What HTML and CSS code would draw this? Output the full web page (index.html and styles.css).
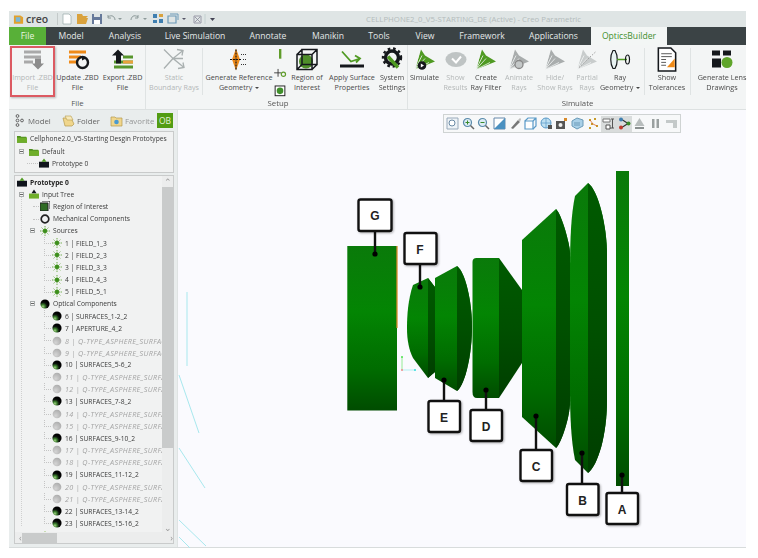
FILE: index.html
```html
<!DOCTYPE html>
<html lang="en">
<head>
<meta charset="utf-8">
<title>Creo Parametric - OpticsBuilder</title>
<link rel="stylesheet" href="styles.css">
</head>
<body>
<svg class="defs" width="0" height="0" aria-hidden="true">
  <defs>
    <radialGradient id="ball" cx="0.28" cy="0.78" r="0.62">
      <stop offset="0" stop-color="#a4cf86"/><stop offset="0.35" stop-color="#3a7d2c"/><stop offset="0.72" stop-color="#0b120b"/><stop offset="1" stop-color="#000"/>
    </radialGradient>
    <radialGradient id="ballgrey" cx="0.35" cy="0.7" r="0.8">
      <stop offset="0" stop-color="#d4d4d4"/><stop offset="1" stop-color="#a8a8a8"/>
    </radialGradient>
    <linearGradient id="lensV" x1="0" y1="0" x2="0" y2="1">
      <stop offset="0" stop-color="#0a7a0a"/><stop offset="0.4" stop-color="#038503"/><stop offset="0.75" stop-color="#006c00"/><stop offset="1" stop-color="#004c00"/>
    </linearGradient>
    <linearGradient id="lensD" x1="0" y1="0" x2="0" y2="1">
      <stop offset="0" stop-color="#005a00"/><stop offset="0.5" stop-color="#005000"/><stop offset="1" stop-color="#003e00"/>
    </linearGradient>
    <symbol id="sphere" viewBox="0 0 12 12"><circle cx="6" cy="6" r="5.500" fill="url(#ball)"/></symbol>
    <symbol id="sphere-off" viewBox="0 0 12 12"><circle cx="6" cy="6" r="5.200" fill="url(#ballgrey)"/></symbol>
    <symbol id="field" viewBox="0 0 12 12"><g stroke="#4f9a22" stroke-width="1" stroke-dasharray="1.400 .7"><path d="M6 0v12M0 6h12M2 2l8 8M10 2l-8 8"/></g><circle cx="6" cy="6" r="2.600" fill="#3d8f1c"/></symbol>
    <symbol id="folder" viewBox="0 0 12 10"><path d="M0 2h4l1 1h6l1 2v5H0z" fill="#4f8f1e"/><path d="M0 4h12v6H0z" fill="#6fae2a"/></symbol>
    <symbol id="proto" viewBox="0 0 12 11"><path d="M0 4h12v7H0z" fill="#10151c"/><path d="M6 0l3 4H3z" fill="#4f9a22"/></symbol>
    <symbol id="inputfolder" viewBox="0 0 12 11"><path d="M0 5h12v6H0z" fill="#6fae2a"/><path d="M6 0l3 4.500H3z" fill="#10151c"/></symbol>
    <symbol id="cone" viewBox="0 0 24 22"><path d="M2 21L8 1l4 6 10 6z" fill="currentColor"/><path d="M2 21L6 5M2 21l7-14M2 21l10-11M2 21l14-7" stroke="#f3f5f5" stroke-width=".8" fill="none"/></symbol>
  </defs>
</svg>

<div class="window">
  <header class="titlebar">
    <div class="qat">
      <span class="logo"><svg width="11" height="11" viewBox="0 0 12 11"><path d="M1 1h7l3 2v7H1z" fill="#e2a12d"/><path d="M3 3h5v5H3z" fill="#7bb7d8"/></svg><span class="logo-text">creo</span></span>
      <span class="qat-sep"></span>
      <svg width="134" height="12" viewBox="0 0 134 12">
        <path d="M5 1h6l2 2v8H5z" fill="#fff" stroke="#9aa" stroke-width=".7"/>
        <path d="M19 5h9l2-2h-5l-1-2h-5zM19 5v6h9l2-6z" fill="#d9a23d"/>
        <path d="M34 1h10v10H34z" fill="#66799a"/><path d="M36 1h6v3h-6z" fill="#dfe5e5"/><path d="M36 7h6v4h-6z" fill="#fff"/>
        <path d="M50 4c4-3 7 0 7 3M50 2v3h3" fill="none" stroke="#8d9a9a" stroke-width="1"/>
        <path d="M60 5l2 2 2-2z" fill="#8d9a9a"/>
        <path d="M80 4c-4-3-7 0-7 3M80 2v3h-3" fill="none" stroke="#8d9a9a" stroke-width="1"/>
        <path d="M85 5l2 2 2-2z" fill="#8d9a9a"/>
        <path d="M95 1h4v4h-4zM101 6h4v4h-4zM95 7h4v3h-4z" fill="#3f7fb0"/><path d="M101 1h4v3h-4z" fill="#d9a23d"/>
        <path d="M110 3h8v7h-8z" fill="none" stroke="#6d9ab8" stroke-width="1.200"/><path d="M112 1h8v6" fill="none" stroke="#6d9ab8"/>
        <path d="M124 5l2 2 2-2z" fill="#556"/>
      </svg>
      <svg width="26" height="12" viewBox="0 0 26 12"><path d="M2 3h7v7H2z" fill="none" stroke="#889" stroke-width=".8"/><path d="M3 4l5 5M8 4l-5 5" stroke="#889" stroke-width=".8"/><path d="M13 1v10" stroke="#bcc" stroke-width=".8"/><path d="M18 5l2.500 3 2.500-3z" fill="#445"/></svg>
    </div>
    <div class="doc-title">CELLPHONE2_0_V5-STARTING_DE (Active) - Creo Parametric</div>
  </header>

  <nav class="tabs">
    <a class="tab tab-file">File</a>
    <a class="tab">Model</a>
    <a class="tab">Analysis</a>
    <a class="tab">Live Simulation</a>
    <a class="tab">Annotate</a>
    <a class="tab">Manikin</a>
    <a class="tab">Tools</a>
    <a class="tab">View</a>
    <a class="tab">Framework</a>
    <a class="tab">Applications</a>
    <a class="tab tab-active">OpticsBuilder</a>
  </nav>

  <section class="ribbon">
    <div class="group group-file">
      <div class="items">
        <div class="btn w45 off hl">
          <svg class="ico" width="24" height="22" viewBox="0 0 24 22"><path d="M3 2h17v3H3zM3 7h17v3H3zM3 12h9v3H3z" fill="#a9a9a9"/><path d="M14 10h6v5h3l-6 6-6-6h3z" fill="#8c8c8c"/></svg>
          <span class="lbl">Import .ZBD<br>File</span>
        </div>
        <div class="btn w45">
          <svg class="ico" width="24" height="22" viewBox="0 0 24 22"><path d="M3 2h17v3H3zM3 7h12v3H3zM3 12h9v3H3z" fill="#ef8a17"/><circle cx="16.500" cy="14" r="5.500" fill="none" stroke="#15181c" stroke-width="2.400"/><path d="M16 8l4 2-4 2z" fill="#15181c"/></svg>
          <span class="lbl">Update .ZBD<br>File</span>
        </div>
        <div class="btn w45">
          <svg class="ico" width="24" height="22" viewBox="0 0 24 22"><path d="M3 12h19v3H3zM3 17h19v3H3z" fill="#57962c"/><path d="M12 7h10v3H12z" fill="#57962c"/><path d="M12 12h10v3H12z" fill="#e9a13b"/><path d="M7 1l6 6h-3v8H5V7H1z" fill="#15181c"/></svg>
          <span class="lbl">Export .ZBD<br>File</span>
        </div>
      </div>
      <div class="group-label">File</div>
    </div>

    <div class="group group-setup">
      <div class="items">
        <div class="btn w50 off">
          <svg class="ico" width="24" height="22" viewBox="0 0 24 22"><g fill="none" stroke="#a9b0b0" stroke-width="1.300"><path d="M2 1l9 9 10-8M2 20l9-10 11 9M11 10h10"/><path d="M15 1l6 1-1 5M16 20l6-1-1-5"/></g></svg>
          <span class="lbl">Static<br>Boundary Rays</span>
        </div>
        <span class="vsep sep-a"></span>
        <div class="btn w66">
          <svg class="ico" width="24" height="24" viewBox="0 0 24 24"><path d="M9 1l4 11-4 11-4-11z" fill="#ef8a17"/><path d="M9 2v20M3 12h12" stroke="#15181c" stroke-width="1.200" stroke-dasharray="2 1"/><path d="M14 7h5M16 12h4M14 17h5" stroke="#333" stroke-dasharray="1 1"/></svg>
          <span class="lbl">Generate Reference<br>Geometry <i class="caret"></i></span>
        </div>
        <div class="mini">
          <svg width="14" height="12" viewBox="0 0 14 12"><path d="M6 1h2.400v10H6z" fill="#5f9c2a"/></svg>
          <svg width="14" height="12" viewBox="0 0 14 12"><path d="M1 6h7M5 2v8" stroke="#333" stroke-width=".9"/><circle cx="10.500" cy="7.500" r="2.200" fill="none" stroke="#5f9c2a" stroke-width="1.200"/></svg>
          <svg width="14" height="12" viewBox="0 0 14 12"><rect x="2" y="1" width="10" height="10" fill="#fff" stroke="#222"/><circle cx="7" cy="6" r="3.400" fill="#3f8f2a"/></svg>
        </div>
        <div class="btn w36">
          <svg class="ico" width="24" height="24" viewBox="0 0 24 24"><circle cx="11" cy="14" r="7" fill="#4f8f2a"/><g fill="none" stroke="#15181c" stroke-width="1.500"><path d="M2 7h15v15H2zM7 2h15v15H7zM2 7l5-5M17 7l5-5M2 22l5-5M17 22l5-5"/></g></svg>
          <span class="lbl">Region of<br>Interest</span>
        </div>
        <div class="btn w50">
          <svg class="ico" width="26" height="22" viewBox="0 0 26 22"><path d="M3 3l9 10 9-3M16 7l5 3-4 4" fill="none" stroke="#4f9a22" stroke-width="1.800"/><path d="M1 16h24v3H1z" fill="#15181c"/></svg>
          <span class="lbl">Apply Surface<br>Properties</span>
        </div>
        <div class="btn w30">
          <svg class="ico" width="22" height="24" viewBox="0 0 22 24"><circle cx="11" cy="10" r="6.500" fill="none" stroke="#15181c" stroke-width="3.500"/><circle cx="11" cy="10" r="9" fill="none" stroke="#15181c" stroke-width="2.400" stroke-dasharray="2.600 2.800"/><path d="M7 9l10 11" stroke="#4f9a22" stroke-width="3.400"/></svg>
          <span class="lbl">System<br>Settings</span>
        </div>
      </div>
      <div class="group-label">Setup</div>
    </div>

    <div class="group group-sim">
      <div class="items">
        <div class="btn s33 c-green">
          <svg class="ico" width="24" height="22" viewBox="0 0 24 22"><use href="#cone"/><circle cx="9" cy="17" r="4.300" fill="#15181c"/><path d="M7.800 15l3.200 2-3.200 2z" fill="#fff"/></svg>
          <span class="lbl">Simulate</span>
        </div>
        <div class="btn s29 off">
          <svg class="ico" width="24" height="22" viewBox="0 0 24 22"><ellipse cx="12" cy="11" rx="10.500" ry="7.500" fill="#bfc4c4"/><path d="M8 10l4 4 5-6" fill="none" stroke="#fff" stroke-width="2"/></svg>
          <span class="lbl">Show<br>Results</span>
        </div>
        <div class="btn s32 c-green">
          <svg class="ico" width="24" height="22" viewBox="0 0 24 22"><use href="#cone"/></svg>
          <span class="lbl">Create<br>Ray Filter</span>
        </div>
        <div class="btn s34 off c-grey">
          <svg class="ico" width="24" height="22" viewBox="0 0 24 22"><use href="#cone"/><circle cx="12" cy="16" r="4" fill="#c4c8c8" stroke="#888" stroke-width="1.300"/></svg>
          <span class="lbl">Animate<br>Rays</span>
        </div>
        <div class="btn s38 off c-grey">
          <svg class="ico" width="24" height="22" viewBox="0 0 24 22"><use href="#cone"/></svg>
          <span class="lbl">Hide/<br>Show Rays</span>
        </div>
        <div class="btn s26 off c-pale">
          <svg class="ico" width="24" height="22" viewBox="0 0 24 22"><use href="#cone"/><path d="M4 19L21 3" stroke="#999" stroke-dasharray="1.500 1.500"/></svg>
          <span class="lbl">Partial<br>Rays</span>
        </div>
        <div class="btn s40">
          <svg class="ico" width="24" height="22" viewBox="0 0 24 22"><path d="M5 2c-3 5-3 13 0 18h2c3-5 3-13 0-18z" fill="#e8f2f2" stroke="#15181c" stroke-width="1.200"/><path d="M9 11h10" stroke="#4f9a22" stroke-width="1.500"/><ellipse cx="19.500" cy="11" rx="2" ry="4.500" fill="none" stroke="#15181c" stroke-width="1.200"/></svg>
          <span class="lbl">Ray<br>Geometry <i class="caret"></i></span>
        </div>
        <span class="vsep sep-b"></span>
        <div class="btn s40">
          <svg class="ico" width="22" height="26" viewBox="0 0 22 26"><path d="M2 1h13l5 5v19H2z" fill="#fff" stroke="#15181c" stroke-width="1.600"/><path d="M5 7h11M5 10h11M5 13h5M5 16h5M5 19h5" stroke="#555"/><path d="M11 21h8v-9z" fill="#ef8a17"/></svg>
          <span class="lbl">Show<br>Tolerances</span>
        </div>
        <span class="vsep sep-c"></span>
        <div class="btn w50">
          <svg class="ico" width="24" height="22" viewBox="0 0 24 22"><path d="M2 2h8v5H2zM13 2h8v5h-8zM2 10h9v9H2z" fill="#15181c"/><circle cx="17" cy="14" r="5.500" fill="#5fa52a"/></svg>
          <span class="lbl">Generate Lens<br>Drawings</span>
        </div>
      </div>
      <div class="group-label">Simulate</div>
    </div>
  </section>

  <main class="workspace">
    <aside class="sidebar">
      <div class="side-tabs">
        <span class="side-tab"><svg width="9" height="13" viewBox="0 0 9 13"><g fill="none" stroke="#555" stroke-width=".9"><circle cx="2.500" cy="2" r="1.400"/><circle cx="2.500" cy="6.500" r="1.400"/><circle cx="2.500" cy="11" r="1.400"/><circle cx="7" cy="6.500" r="1.400"/></g></svg>Model</span>
        <span class="side-tab tab-folder"><svg width="13" height="12" viewBox="0 0 13 12"><path d="M1 3h8l3 6-2 2H3z" fill="#f0d68c" stroke="#b59a4c" stroke-width=".7"/><path d="M3 1h6l2 4H5z" fill="#f7e9b9" stroke="#b59a4c" stroke-width=".6"/></svg>Folder</span>
        <span class="side-tab tab-fav"><svg width="13" height="12" viewBox="0 0 13 12"><path d="M1 2h4l1 1h6v8H1z" fill="#f0d68c" stroke="#b59a4c" stroke-width=".7"/><circle cx="6.500" cy="7" r="2.300" fill="#4a9ad0"/></svg><span class="fade">Favorite</span></span>
        <span class="ob">OB</span>
      </div>

      <div class="tree-box tree-top">
        <div class="row r0"><svg class="i" width="10" height="9"><use href="#folder"/></svg><span>Cellphone2.0_V5-Starting Desgin Prototypes</span></div>
        <div class="row r1"><b class="exp"></b><svg class="i" width="10" height="9"><use href="#folder"/></svg><span>Default</span></div>
        <div class="row r2"><svg class="i" width="10" height="10"><use href="#proto"/></svg><span>Prototype 0</span></div>
      </div>

      <div class="tree-box tree-main">
        <div class="tree-scroll">
          <div class="row r0 strong"><svg class="i" width="10" height="10"><use href="#proto"/></svg><span>Prototype 0</span></div>
          <div class="row r1"><b class="exp"></b><svg class="i" width="10" height="10"><use href="#inputfolder"/></svg><span>Input Tree</span></div>
          <div class="row r3"><svg class="i" width="10" height="10" viewBox="0 0 10 10"><path d="M0 2h8v8H0z" fill="#2f6b24" stroke="#222"/><path d="M2 0h8v8" fill="none" stroke="#222"/></svg><span>Region of Interest</span></div>
          <div class="row r3"><svg class="i" width="10" height="10" viewBox="0 0 10 10"><circle cx="5" cy="5" r="3.800" fill="none" stroke="#222" stroke-width="1.700"/></svg><span>Mechanical Components</span></div>
          <div class="row r3 has-exp"><b class="exp"></b><svg class="i" width="10" height="10"><use href="#field"/></svg><span>Sources</span></div>
          <div class="row r4"><svg class="i" width="10" height="10"><use href="#field"/></svg><span>1 | FIELD_1_3</span></div>
          <div class="row r4"><svg class="i" width="10" height="10"><use href="#field"/></svg><span>2 | FIELD_2_3</span></div>
          <div class="row r4"><svg class="i" width="10" height="10"><use href="#field"/></svg><span>3 | FIELD_3_3</span></div>
          <div class="row r4"><svg class="i" width="10" height="10"><use href="#field"/></svg><span>4 | FIELD_4_3</span></div>
          <div class="row r4"><svg class="i" width="10" height="10"><use href="#field"/></svg><span>5 | FIELD_5_1</span></div>
          <div class="row r3 has-exp"><b class="exp"></b><svg class="i" width="10" height="10"><use href="#sphere"/></svg><span>Optical Components</span></div>
          <div class="row r4"><svg class="i" width="10" height="10"><use href="#sphere"/></svg><span>6 | SURFACES_1-2_2</span></div>
          <div class="row r4"><svg class="i" width="10" height="10"><use href="#sphere"/></svg><span>7 | APERTURE_4_2</span></div>
          <div class="row r4 off-row"><svg class="i" width="10" height="10"><use href="#sphere-off"/></svg><span>8 | Q-TYPE_ASPHERE_SURFACE</span></div>
          <div class="row r4 off-row"><svg class="i" width="10" height="10"><use href="#sphere-off"/></svg><span>9 | Q-TYPE_ASPHERE_SURFACE</span></div>
          <div class="row r4"><svg class="i" width="10" height="10"><use href="#sphere"/></svg><span>10 | SURFACES_5-6_2</span></div>
          <div class="row r4 off-row"><svg class="i" width="10" height="10"><use href="#sphere-off"/></svg><span>11 | Q-TYPE_ASPHERE_SURFACE</span></div>
          <div class="row r4 off-row"><svg class="i" width="10" height="10"><use href="#sphere-off"/></svg><span>12 | Q-TYPE_ASPHERE_SURFACE</span></div>
          <div class="row r4"><svg class="i" width="10" height="10"><use href="#sphere"/></svg><span>13 | SURFACES_7-8_2</span></div>
          <div class="row r4 off-row"><svg class="i" width="10" height="10"><use href="#sphere-off"/></svg><span>14 | Q-TYPE_ASPHERE_SURFACE</span></div>
          <div class="row r4 off-row"><svg class="i" width="10" height="10"><use href="#sphere-off"/></svg><span>15 | Q-TYPE_ASPHERE_SURFACE</span></div>
          <div class="row r4"><svg class="i" width="10" height="10"><use href="#sphere"/></svg><span>16 | SURFACES_9-10_2</span></div>
          <div class="row r4 off-row"><svg class="i" width="10" height="10"><use href="#sphere-off"/></svg><span>17 | Q-TYPE_ASPHERE_SURFACE</span></div>
          <div class="row r4 off-row"><svg class="i" width="10" height="10"><use href="#sphere-off"/></svg><span>18 | Q-TYPE_ASPHERE_SURFACE</span></div>
          <div class="row r4"><svg class="i" width="10" height="10"><use href="#sphere"/></svg><span>19 | SURFACES_11-12_2</span></div>
          <div class="row r4 off-row"><svg class="i" width="10" height="10"><use href="#sphere-off"/></svg><span>20 | Q-TYPE_ASPHERE_SURFACE</span></div>
          <div class="row r4 off-row"><svg class="i" width="10" height="10"><use href="#sphere-off"/></svg><span>21 | Q-TYPE_ASPHERE_SURFACE</span></div>
          <div class="row r4"><svg class="i" width="10" height="10"><use href="#sphere"/></svg><span>22 | SURFACES_13-14_2</span></div>
          <div class="row r4"><svg class="i" width="10" height="10"><use href="#sphere"/></svg><span>23 | SURFACES_15-16_2</span></div>
          <div class="row r3 has-exp"><b class="exp"></b><svg class="i" width="10" height="10" viewBox="0 0 10 10"><path d="M5 0l5 8H0z" fill="#6fae2a"/></svg><span>Sinks</span></div>
        </div>
        <div class="vbar"><span class="chev">&#8963;</span><span class="thumb"></span><span class="chev chev-down">&#8964;</span></div>
        <div class="hbar"><span class="harrow">&#8249;</span><span class="hthumb"></span><span class="harrow harrow-r">&#8250;</span></div>
      </div>
    </aside>

    <section class="canvas">
      <svg class="scene" viewBox="178 110 568 438" aria-label="Lens stack diagram">
        <g class="rays">
          <path d="M187 292V366M179 375L199 433M179 448L205 488M179 520L206 546M179 537L190 548"/>
        </g>
        <rect x="347.300" y="246" width="49.700" height="164.500" fill="url(#lensV)"/>
        <path d="M397 246v82" stroke="#d98a2b" stroke-width="1.300"/>
        <path d="M402 357v13" stroke="#7be87b" stroke-width=".8"/><path d="M402 370h13" stroke="#9eeef0" stroke-width=".8"/>
        <circle cx="402" cy="357" r="1" fill="#4fe04f"/><circle cx="415" cy="370" r="1" fill="#33dcdc"/><circle cx="402" cy="370" r="1" fill="#f08a8a"/>

        <path d="M428 278L413 285C408 300 407 315 407 328C407 340 409 350 413 358L428 378L435 372V287z" fill="url(#lensV)"/>
        <path d="M428 278l7 9v85l-7 6z" fill="url(#lensD)"/>
        <path d="M435 278L457 266C465 272 472 300 472 327C472 355 465 385 457 391L435 378z" fill="url(#lensV)"/>
        <path d="M457 266C465 272 472 300 472 327C472 355 465 385 457 391z" fill="url(#lensD)"/>
        <path d="M472.500 262q0-4 4-4H499v140h-22q-4.500 0-4.500-6z" fill="url(#lensV)"/>
        <path d="M499 258l23 32v73l-23 35z" fill="url(#lensD)"/>
        <path d="M522 240L556 209C562 215 570 245 570 253V402C570 416 562 442 556 448L522 417z" fill="url(#lensV)"/>
        <path d="M556 209C562 215 570 245 570 253V402C570 416 562 442 556 448z" fill="url(#lensD)"/>
        <path d="M575 196L588 183C598 190 607 225 607 255V400C607 435 598 465 588 473L575 460C571 440 570 415 570 390V270C570 240 571 215 575 196z" fill="url(#lensV)"/>
        <path d="M588 183C598 190 607 225 607 255V400C607 435 598 465 588 473z" fill="url(#lensD)"/>
        <rect x="616" y="171" width="13" height="315" fill="url(#lensV)"/>

        <g class="callout">
          <path class="stem" d="M375 231v23"/><circle cx="375" cy="254" r="2.600"/><rect x="358.500" y="199.500" width="33" height="31.500" rx="2"/><text x="375" y="220">G</text>
        </g>
        <g class="callout">
          <path class="stem" d="M420 264v23"/><circle cx="420" cy="287" r="2.600"/><rect x="404.500" y="233" width="32" height="31" rx="2"/><text x="420" y="253.500">F</text>
        </g>
        <g class="callout">
          <path class="stem" d="M444 381v20"/><circle cx="444" cy="380" r="2.600"/><rect x="428.500" y="401" width="31.500" height="31" rx="2"/><text x="444" y="421.500">E</text>
        </g>
        <g class="callout">
          <path class="stem" d="M486 391v19"/><circle cx="486" cy="390" r="2.600"/><rect x="470.500" y="410" width="31.500" height="31" rx="2"/><text x="486" y="430.500">D</text>
        </g>
        <g class="callout">
          <path class="stem" d="M536 416v34"/><circle cx="536" cy="416" r="2.600"/><rect x="520.500" y="450" width="31.500" height="31" rx="2"/><text x="536" y="470.500">C</text>
        </g>
        <g class="callout">
          <path class="stem" d="M582 453v31"/><circle cx="582" cy="453" r="2.600"/><rect x="567" y="484" width="31.500" height="31" rx="2"/><text x="582.500" y="504.500">B</text>
        </g>
        <g class="callout">
          <path class="stem" d="M622 475v18"/><circle cx="622" cy="475" r="2.600"/><rect x="606.500" y="493" width="31.500" height="31" rx="2"/><text x="622" y="513.500">A</text>
        </g>
      </svg>

      <div class="viewbar">
        <span class="vb"><svg width="13" height="13" viewBox="0 0 13 13"><path d="M1 1h11v11H1z" fill="#eef3f7" stroke="#9ab"/><circle cx="6" cy="6" r="3" fill="#fff" stroke="#6a8aa5"/></svg></span>
        <span class="vb"><svg width="13" height="13" viewBox="0 0 13 13"><circle cx="5.500" cy="5.500" r="4" fill="#dcebf5" stroke="#5a8aaa" stroke-width="1.200"/><path d="M8.500 8.500l3.500 3.500" stroke="#666" stroke-width="1.500"/><path d="M3.500 5.500h4M5.500 3.500v4" stroke="#3a8a2a"/></svg></span>
        <span class="vb"><svg width="13" height="13" viewBox="0 0 13 13"><circle cx="5.500" cy="5.500" r="4" fill="#dcebf5" stroke="#5a8aaa" stroke-width="1.200"/><path d="M8.500 8.500l3.500 3.500" stroke="#666" stroke-width="1.500"/><path d="M3.500 5.500h4" stroke="#3a8a2a"/></svg></span>
        <span class="vb"><svg width="13" height="13" viewBox="0 0 13 13"><path d="M1 1h11v11H1z" fill="#fff" stroke="#68a"/><path d="M1 12L12 1v11z" fill="#4a90c0"/></svg></span>
        <span class="vb"><svg width="13" height="13" viewBox="0 0 13 13"><path d="M2 11l7-8 2 2-7 7z" fill="#777"/><path d="M9 3l2-2 1 1-1 3z" fill="#bbb"/></svg></span>
        <span class="vb"><svg width="13" height="13" viewBox="0 0 13 13"><path d="M1 4h8v8H1z" fill="#fff" stroke="#5a9ac8" stroke-width="1.200"/><path d="M1 4l3-3h8v8l-3 3M9 4l3-3" fill="none" stroke="#5a9ac8" stroke-width="1.200"/></svg></span>
        <span class="vb"><svg width="13" height="13" viewBox="0 0 13 13"><circle cx="6" cy="6" r="5" fill="#bfe0f2" stroke="#5a9ac8"/><path d="M6 1v10M1 6h10" stroke="#5a9ac8" stroke-width=".7"/><path d="M8 8h4v4H8z" fill="#555"/></svg></span>
        <span class="vb"><svg width="13" height="13" viewBox="0 0 13 13"><path d="M1 4h9v8H1z" fill="#555"/><circle cx="5.500" cy="8" r="2" fill="#eee"/><path d="M9 1h3v3H9z" fill="#d98a2b"/></svg></span>
        <span class="vb"><svg width="13" height="13" viewBox="0 0 13 13"><path d="M1 4l5-3 6 2v6l-6 3-5-3z" fill="#a9d0e8" stroke="#6a9ab8"/><path d="M3 6h6M3 8h6" stroke="#6a9ab8"/></svg></span>
        <span class="vb"><svg width="13" height="13" viewBox="0 0 13 13"><g fill="#c79a2a"><path d="M2 2h2v2H2zM7 1h2v2H7zM4 6h2v2H4zM9 8h2v2H9zM2 10h2v2H2z"/></g><path d="M3 3l3 4 4 2" stroke="#d96a2a" stroke-width=".8" fill="none"/></svg></span>
        <span class="vb vb-on"><svg width="13" height="13" viewBox="0 0 13 13"><path d="M1 2h7v3H1z" fill="#fff" stroke="#777"/><path d="M9 2h3M10.500 2v9M8 11h4" stroke="#555"/><path d="M4 8h4v4H4z" fill="#fff" stroke="#555"/></svg></span>
        <span class="vb vb-on"><svg width="13" height="13" viewBox="0 0 13 13"><path d="M3 2l7 4.500L3 11" fill="none" stroke="#333" stroke-width="1.200"/><circle cx="3" cy="2.500" r="2" fill="#3f7fb0"/><circle cx="10.500" cy="6.500" r="2" fill="#3a8a2a"/><circle cx="3" cy="10.500" r="2" fill="#c0392b"/></svg></span>
        <span class="vb"><svg width="13" height="13" viewBox="0 0 13 13"><path d="M6.500 1l5 8h-10z" fill="#b8bdbd"/><path d="M2 10h9v2H2z" fill="#8a9090"/></svg></span>
        <span class="vb"><svg width="13" height="13" viewBox="0 0 13 13"><path d="M3 2h2.500v9H3zM7.500 2H10v9H7.500z" fill="#9aa0a0"/></svg></span>
        <span class="vb"><svg width="13" height="13" viewBox="0 0 13 13"><path d="M1 3h11v8H8V6H1z" fill="#c4c9c9"/></svg></span>
      </div>
    </section>
  </main>
</div>
</body>
</html>
```

FILE: styles.css
```css
* { box-sizing: border-box; }
html, body { margin: 0; padding: 0; background: #fff; }
body { width: 758px; height: 558px; overflow: hidden; font-family: "Open Sans", "Liberation Sans", sans-serif; color: #444; }
.defs { position: absolute; }
.window { margin: 11px 0 0 9px; width: 737px; height: 537px; display: flex; flex-direction: column; filter: blur(0.4px); border-bottom: 1px solid #d8dcdc; }

.titlebar { height: 16px; background: #dfe5e5; display: flex; align-items: center; position: relative; flex: none; }
.qat { display: flex; align-items: center; padding-left: 4px; }
.logo { display: flex; align-items: center; gap: 2px; width: 44px; }
.logo-text { font-size: 10.500px; font-weight: 600; color: #444; }
.qat-sep { width: 1px; height: 12px; background: #c4caca; }
.doc-title { position: absolute; left: 357px; top: 0; line-height: 16px; font-size: 7.800px; color: #b4bcbc; white-space: nowrap; }

.tabs { height: 18px; flex: none; background: #3b4345; display: grid; grid-template-columns: 37px 50px 58px 82px 64px 56px 46px 46px 68px 75px 76px; }
.tab { font-size: 8.600px; line-height: 18px; color: #e4e8e8; text-align: center; white-space: nowrap; }
.tab-file { background: #58b038; color: #e9f5e0; }
.tab-active { background: #f3f6f5; color: #3f8f2e; }

.ribbon { height: 65px; flex: none; background: #f3f5f5; display: flex; border-bottom: 1px solid #dde1e1; }
.group { display: flex; flex-direction: column; border-right: 1px solid #dfe3e3; padding-top: 1px; }
.group-file { width: 138px; padding-left: 1px; }
.group-setup { width: 262px; padding-left: 3px; }
.group-sim { flex: 1; border-right: 0; }
.items { display: flex; height: 51px; }
.group-label { font-size: 7.800px; line-height: 12px; text-align: center; color: #555; }
.btn { display: flex; flex-direction: column; align-items: center; flex: none; padding-top: 1px; }
.ico { height: 25px; flex: none; }
.lbl { display: block; font-size: 7.200px; line-height: 10px; text-align: center; white-space: nowrap; color: #4a4a4a; }
.off .lbl { color: #b4b8b8; }
.hl { outline: 2px solid #dc5a62; outline-offset: -2px; box-shadow: 1px 1px 2px rgba(0,0,0,.25); }
.w30 { width: 30px; } .w36 { width: 36px; } .w45 { width: 45px; } .w50 { width: 50px; } .w66 { width: 66px; }
.s26 { width: 26px; } .s29 { width: 29px; } .s32 { width: 32px; } .s33 { width: 33px; } .s34 { width: 34px; } .s38 { width: 38px; } .s40 { width: 40px; }
.group-setup .w36 { margin: 0 2px; }
.c-green { color: #4f9a22; } .c-grey { color: #a9adad; } .c-pale { color: #c8cccc; }
.mini { width: 14px; flex: none; margin-left: 1px; display: flex; flex-direction: column; gap: 7px; padding-top: 2px; }
.vsep { flex: none; width: 1px; height: 47px; margin-top: 2px; background: #dfe3e3; }
.sep-a { margin-left: 3px; margin-right: 3px; }
.sep-b { margin-left: 4px; margin-right: 2px; }
.sep-c { margin-left: 3px; margin-right: 6px; }
.caret { display: inline-block; width: 0; height: 0; border: 2px solid transparent; border-top: 2.500px solid #444; border-bottom: 0; vertical-align: middle; margin-left: 1px; }

.workspace { flex: 1; min-height: 0; display: flex; }
.sidebar { width: 169px; flex: none; background: #e9eded; border-right: 1px solid #dfe3e3; padding: 0 3px 0 5px; display: flex; flex-direction: column; }
.side-tabs { height: 21px; flex: none; display: flex; align-items: center; margin: 0 -3px 0 -5px; padding-left: 6px; font-size: 7.800px; color: #666; }
.side-tab { display: flex; align-items: center; gap: 4px; width: 47px; white-space: nowrap; }
.tab-folder { gap: 2px; width: 48px; }
.tab-fav { gap: 2px; width: 47px; overflow: hidden; }
.fade { opacity: .65; }
.ob { width: 16px; height: 15px; background: #529c12; color: #e6f2d8; font-size: 8.500px; line-height: 15px; text-align: center; }

.tree-box { background: #f1f2f2; border: 1px solid #c9cbcb; position: relative; }
.tree-top { height: 42px; flex: none; margin-bottom: 2px; }
.tree-main { height: 369px; flex: none; overflow: hidden; }
.tree-main::before { content: ""; position: absolute; left: 6px; top: 20px; height: 330px; border-left: 1px dotted #d0d0d0; }
.tree-scroll { position: absolute; left: 0; top: 0; width: 149px; height: 358px; overflow: hidden; }
.row { height: 12.200px; display: flex; align-items: center; font-size: 6.700px; color: #3a3a3a; white-space: nowrap; position: relative; }
.tree-top .r0 { height: 13px; }
.i { flex: none; margin-right: 3px; }
.exp { position: absolute; width: 5px; height: 5px; border: 1px solid #a8acac; background: #f6f6f6; top: 3.500px; }
.exp::after { content: ""; position: absolute; left: 0; top: 1px; width: 3px; height: 1px; background: #666; }
.r0 { padding-left: 2px; }
.r1 { padding-left: 14px; }
.r1 .exp { left: 4px; }
.r2 { padding-left: 24px; }
.r2::before, .r3::before, .r4::before { content: ""; position: absolute; top: 6px; border-top: 1px dotted #c4c4c4; }
.r2::before { left: 12px; width: 11px; }
.r3 { padding-left: 25px; }
.r3::before { left: 18px; width: 6px; }
.has-exp::before { display: none; }
.r3 .exp { left: 15px; }
.r4 { padding-left: 37px; }
.r4::before { left: 29px; width: 7px; }
.r4::after { content: ""; position: absolute; left: 29px; top: 0; height: 7px; border-left: 1px dotted #c4c4c4; }
.strong { font-weight: 700; color: #222; }
.off-row { color: #a4a4a4; font-style: italic; font-size: 7.200px; letter-spacing: .35px; }

.vbar { position: absolute; right: 0; top: 0; bottom: 10px; width: 11px; background: #eceded; display: flex; flex-direction: column; align-items: center; }
.chev { height: 11px; line-height: 12px; font-size: 9px; color: #999; flex: none; }
.thumb { width: 11px; height: 261px; background: #c9cbcb; flex: none; }
.chev-down { margin-top: auto; }
.hbar { position: absolute; left: 0; right: 0; bottom: 0; height: 11px; background: #eceded; display: flex; align-items: center; padding-left: 4px; }
.harrow { font-size: 9px; line-height: 10px; color: #999; width: 6px; }
.hthumb { width: 110px; height: 10px; background: #c9cbcb; }
.harrow-r { margin-left: 113px; }

.canvas { flex: 1; position: relative; background: #fafafe; min-width: 0; }
.scene { position: absolute; left: 0; top: 0; width: 568px; height: 438px; }
.rays path { stroke: #a8e8ee; stroke-width: 1; fill: none; }
.callout { fill: #000; }
.callout rect { fill: #fff; stroke: #111; stroke-width: 2.400; filter: drop-shadow(1px 1px 1px rgba(0,0,0,.3)); }
.callout .stem { fill: none; stroke: #111; stroke-width: 2.400; }
.callout text { font-family: "Liberation Sans", sans-serif; font-size: 12px; font-weight: 700; text-anchor: middle; fill: #222; }
.viewbar { position: relative; margin: 4px 0 0 265px; width: 238px; height: 19px; background: #f7f8f9; border: 1px solid #cfd3d3; display: flex; align-items: center; padding-left: 1px; }
.vb { width: 15.600px; height: 16px; flex: none; display: flex; align-items: center; justify-content: center; }
.vb-on { background: #d9dcdc; }
```
